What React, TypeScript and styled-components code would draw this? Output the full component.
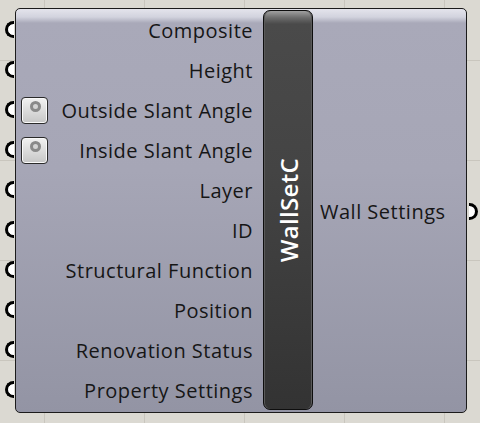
import React from 'react';
import styled, { createGlobalStyle } from 'styled-components';

const GlobalStyle = createGlobalStyle`
  html, body {
    margin: 0;
    padding: 0;
  }
  body {
    width: 480px;
    height: 423px;
    overflow: hidden;
    background-color: #dbd9d2;
    background-image:
      linear-gradient(to right, #c9c6be 1px, transparent 1px),
      linear-gradient(to bottom, #c9c6be 1px, transparent 1px);
    background-size: 100px 100px;
    background-position: 44px 60px;
    font-family: "Open Sans", "Noto Sans", sans-serif;
  }
`;

const Canvas = styled.div`
  padding: 8px 0 0 15px;
`;

const Component = styled.div`
  position: relative;
  width: 450px;
  height: 403px;
  display: grid;
  grid-template-columns: 247px 50px 1fr;
  border: 1.5px solid #1b1b1b;
  border-radius: 5px;
  background: linear-gradient(
    to bottom,
    #e4e4ec 0px,
    #d2d3de 8px,
    #a9a9b9 14px,
    #a6a6b6 40%,
    #9394a4 100%
  );
`;

const Inputs = styled.div`
  display: flex;
  flex-direction: column;
  padding-top: 1px;
`;

const Row = styled.div`
  position: relative;
  height: 40px;
  display: flex;
  align-items: center;
  justify-content: flex-end;
  padding: 0 10px 0 5px;
  font-size: 20px;
  letter-spacing: 0.5px;
  color: #161616;
  white-space: nowrap;
`;

const Label = styled.span`
  margin-left: auto;
`;

const Grip = styled.span<{ $side: 'left' | 'right' }>`
  position: absolute;
  top: 50%;
  width: 6px;
  height: 11px;
  margin-top: -9px;
  border: 3.5px solid #000;
  background: #fff;
  ${(p) =>
    p.$side === 'left'
      ? 'left: -11.5px; border-right: 0; border-radius: 9px 0 0 9px;'
      : 'right: -11.5px; border-left: 0; border-radius: 0 9px 9px 0;'}
`;

const Toggle = styled.span`
  position: relative;
  width: 25px;
  height: 25px;
  border: 1.5px solid #2a2a2a;
  border-radius: 4px;
  background: linear-gradient(to bottom, #f2f2f2, #c6c6c6);
  box-shadow: inset 0 0 0 1px #fafafa;
  &::after {
    content: '';
    position: absolute;
    left: 8px;
    top: 3px;
    width: 5px;
    height: 5px;
    border: 3.5px solid #8a8a8a;
    border-radius: 50%;
    background: #d4d4d4;
  }
`;

const Bar = styled.div`
  margin: 1px 0 2px;
  border: 1.5px solid #0e0e0e;
  border-radius: 7px;
  background: linear-gradient(
    to bottom,
    #a0a0a0 0px,
    #6a6a6a 7px,
    #4a4a4a 13px,
    #444 40%,
    #333 100%
  );
  box-shadow: inset 1px 0 0 #5a5a5a, inset -1px 0 0 #5a5a5a;
  display: flex;
  align-items: center;
  justify-content: center;
  z-index: 1;
`;

const Nickname = styled.span`
  writing-mode: vertical-rl;
  transform: rotate(180deg);
  color: #fff;
  font-size: 24px;
  font-weight: 600;
  letter-spacing: 0.3px;
`;

const Outputs = styled.div`
  display: flex;
  flex-direction: column;
  justify-content: center;
`;

const OutRow = styled(Row)`
  justify-content: flex-start;
  padding: 0 0 0 7px;
  margin-top: 2px;
`;

type Input = { name: string; toggle?: boolean };

const inputs: Input[] = [
  { name: 'Composite' },
  { name: 'Height' },
  { name: 'Outside Slant Angle', toggle: true },
  { name: 'Inside Slant Angle', toggle: true },
  { name: 'Layer' },
  { name: 'ID' },
  { name: 'Structural Function' },
  { name: 'Position' },
  { name: 'Renovation Status' },
  { name: 'Property Settings' },
];

const App: React.FC = () => {
  return (
    <Canvas>
      <GlobalStyle />
      <Component>
        <Inputs>
          {inputs.map((input) => (
            <Row key={input.name}>
              <Grip $side="left" />
              {input.toggle && <Toggle />}
              <Label>{input.name}</Label>
            </Row>
          ))}
        </Inputs>
        <Bar>
          <Nickname>WallSetC</Nickname>
        </Bar>
        <Outputs>
          <OutRow>
            Wall Settings
            <Grip $side="right" />
          </OutRow>
        </Outputs>
      </Component>
    </Canvas>
  );
};

export default App;
